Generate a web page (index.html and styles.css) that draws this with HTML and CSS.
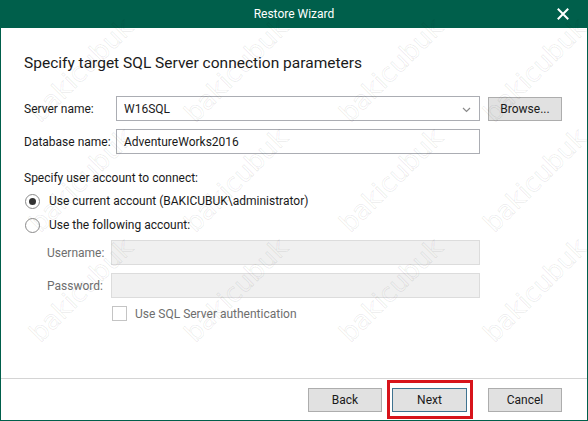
FILE: index.html
```html
<!DOCTYPE html>
<html>
<head>
<meta charset="utf-8">
<link rel="stylesheet" href="styles.css">
</head>
<body>
<div class="window">
  <div class="titlebar">
    <span class="title">Restore Wizard</span>
    <svg class="close" width="12" height="12" viewBox="0 0 12 12"><path d="M1.5 1.5 L10.5 10.5 M10.5 1.5 L1.5 10.5" stroke="#fff" stroke-width="2" stroke-linecap="square"/></svg>
  </div>
  <div class="content">
    <h1 class="heading">Specify target SQL Server connection parameters</h1>
    <div class="form">
      <label class="lbl">Server name:</label>
      <div class="input combo"><span>W16SQL</span>
        <svg class="chev" width="9" height="6" viewBox="0 0 9 6"><path d="M1 1 L4.5 4.5 L8 1" fill="none" stroke="#8a8a8a" stroke-width="1.2"/></svg>
      </div>
      <button class="btn browse">Browse...</button>
      <label class="lbl">Database name:</label>
      <div class="input"><span>AdventureWorks2016</span></div>
    </div>
    <div class="section">Specify user account to connect:</div>
    <div class="radio-row first"><span class="radio checked"></span><span>Use current account (BAKICUBUK\administrator)</span></div>
    <div class="radio-row"><span class="radio"></span><span>Use the following account:</span></div>
    <div class="account">
      <label class="lbl dis">Username:</label>
      <div class="input disabled"></div>
      <label class="lbl dis">Password:</label>
      <div class="input disabled"></div>
      <div class="check-row"><span class="checkbox"></span><span class="dis">Use SQL Server authentication</span></div>
    </div>
  </div>
  <div class="footer">
    <button class="btn">Back</button>
    <button class="btn next">Next</button>
    <button class="btn">Cancel</button>
  </div>
  <div class="watermarks">
    <span style="left:80px;top:70px">bakicubuk</span>
    <span style="left:235px;top:70px">bakicubuk</span>
    <span style="left:390px;top:70px">bakicubuk</span>
    <span style="left:534px;top:70px">bakicubuk</span>
    <span style="left:80px;top:180px">bakicubuk</span>
    <span style="left:235px;top:180px">bakicubuk</span>
    <span style="left:390px;top:180px">bakicubuk</span>
    <span style="left:534px;top:180px">bakicubuk</span>
    <span style="left:80px;top:290px">bakicubuk</span>
    <span style="left:235px;top:290px">bakicubuk</span>
    <span style="left:390px;top:290px">bakicubuk</span>
    <span style="left:534px;top:290px">bakicubuk</span>
  </div>
</div>
</body>
</html>
```
FILE: styles.css
```css
* { box-sizing: border-box; }
html, body { margin: 0; padding: 0; background: #fff; }
body {
  width: 588px; height: 421px; overflow: hidden;
  font-family: Roboto, "Noto Sans", sans-serif;
  font-size: 12px; color: #1a1a1a;
}
.window {
  position: relative;
  width: 588px; height: 421px;
  border: 1px solid #005f4b; border-top: none;
  display: flex; flex-direction: column;
  overflow: hidden;
}
.titlebar {
  height: 28px; margin: 0 -1px;
  background: #005f4b; color: #fff;
  display: flex; align-items: center; justify-content: center;
  position: relative;
}
.title { font-size: 12px; }
.close { position: absolute; right: 19px; top: 8px; }
.content { flex: 1; padding: 24px 25px 0 23px; }
.heading { margin: 0; font-size: 15.5px; font-weight: normal; line-height: 22px; color: #1a1a1a; }
.form {
  margin-top: 22px;
  display: grid;
  grid-template-columns: 84px 364px 74px;
  column-gap: 8px; row-gap: 8px;
  align-items: center;
}
.lbl { line-height: 16px; white-space: nowrap; }
.dis { color: #6e6e6e; }
.input {
  height: 25px; border: 1px solid #abadb3; background: #fff;
  display: flex; align-items: center; padding: 0 7px;
  position: relative;
}
.combo .chev { position: absolute; right: 8px; top: 10px; }
.btn {
  font: inherit; color: #1a1a1a;
  height: 24px; width: 74px;
  background: #e1e1e1; border: 1px solid #adadad;
  padding: 0; margin: 0;
}
.section { margin-top: 16px; line-height: 16px; }
.radio-row { display: flex; align-items: center; gap: 9px; height: 24px; }
.radio-row.first { margin-top: 3px; }
.radio {
  width: 15px; height: 15px; border-radius: 50%;
  border: 1px solid #8a8a8a; background: #fff;
  display: flex; align-items: center; justify-content: center;
  margin-left: 1px;
}
.radio.checked::after {
  content: ""; width: 7px; height: 7px; border-radius: 50%; background: #333;
}
.account {
  margin-top: 3px; margin-left: 23px;
  display: grid;
  grid-template-columns: 64px 369px;
  row-gap: 8px;
  align-items: center;
}
.input.disabled { background: #f0f0f0; border-color: #dcdcdc; }
.check-row { grid-column: 2; display: flex; align-items: center; gap: 8px; margin-top: 0; margin-left: 1px; }
.checkbox { width: 15px; height: 15px; border: 1px solid #c4c4c4; background: #fff; }
.footer {
  height: 42px; border-top: 1px solid #d4d4d4;
  display: flex; justify-content: flex-end; align-items: flex-start;
  padding: 9px 25px 0 0;
}
.footer .btn:nth-child(1) { margin-right: 10px; }
.footer .btn:nth-child(2) { margin-right: 21px; }
.next { position: relative; width: 75px; border-color: #3f7390; }
.next::after {
  content: ""; position: absolute;
  left: -6px; right: -7px; top: -9px; bottom: -8px;
  border: 3px solid #d7141b;
}
.watermarks { position: absolute; inset: 0; pointer-events: none; }
.watermarks span {
  position: absolute;
  transform: translate(-50%, -50%) rotate(-45deg);
  font-family: "DejaVu Sans", sans-serif; font-size: 26px;
  color: rgba(255,255,255,0);
  -webkit-text-stroke: 1px rgba(0,0,0,0.07);
  white-space: nowrap;
}
```
